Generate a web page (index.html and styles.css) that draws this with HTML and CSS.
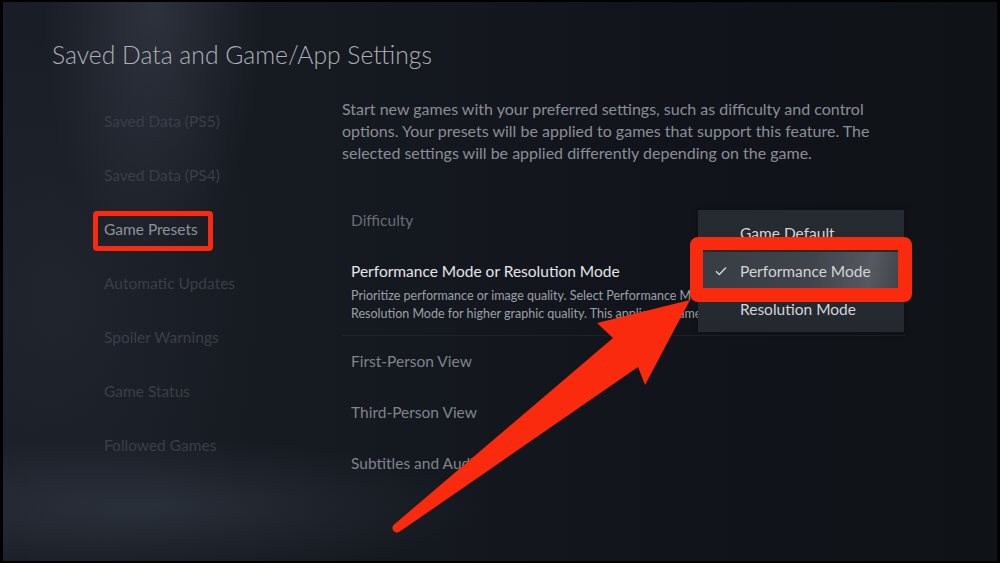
FILE: index.html
```html
<!DOCTYPE html>
<html lang="en">
<head>
<meta charset="utf-8">
<title>Saved Data and Game/App Settings</title>
<link rel="stylesheet" href="styles.css">
</head>
<body>
<div class="frame">
  <h1 class="title">Saved Data and Game/App Settings</h1>
  <div class="layout">
    <nav class="side">
      <div class="side-item">Saved Data (PS5)</div>
      <div class="side-item">Saved Data (PS4)</div>
      <div class="side-item current">Game Presets</div>
      <div class="side-item">Automatic Updates</div>
      <div class="side-item">Spoiler Warnings</div>
      <div class="side-item">Game Status</div>
      <div class="side-item">Followed Games</div>
    </nav>
    <main class="content">
      <p class="intro">Start new games with your preferred settings, such as difficulty and control<br>options. Your presets will be applied to games that support this feature. The<br>selected settings will be applied differently depending on the game.</p>
      <div class="settings">
        <div class="setting dim">Difficulty</div>
        <div class="setting focused">
          <div class="setting-name">Performance Mode or Resolution Mode</div>
          <div class="setting-desc">Prioritize performance or image quality. Select Performance Mode for higher frame rate or<br>Resolution Mode for higher graphic quality. This applies to games that support this setting.</div>
        </div>
        <div class="setting">First-Person View</div>
        <div class="setting">Third-Person View</div>
        <div class="setting">Subtitles and Audio</div>
      </div>
    </main>
  </div>

  <div class="dropdown">
    <div class="option">Game Default</div>
    <div class="option selected">
      <svg class="check" width="12" height="10" viewBox="0 0 12 10"><path d="M1 5.2 L4.3 8.4 L11 1.4" fill="none" stroke="#d6d8db" stroke-width="1.4"/></svg>
      Performance Mode
    </div>
    <div class="option">Resolution Mode</div>
  </div>

  <div class="mark mark-presets"></div>
  <div class="mark mark-perf"></div>

  <svg class="arrow" width="1000" height="563" viewBox="0 0 1000 563">
    <path d="M394.2 524.4 L613 338 L597 323 L690 300 L645 385 L638 367 L399.8 531.6 A4.5 4.5 0 0 1 394.2 524.4 Z" fill="#fa2a0e"/>
  </svg>
</div>
</body>
</html>
```

FILE: styles.css
```css
* { box-sizing: border-box; }

html, body {
  margin: 0;
  padding: 0;
  background: #000;
}

.frame {
  position: relative;
  width: 1000px;
  height: 563px;
  overflow: hidden;
  border-style: solid;
  border-color: #000;
  border-width: 2px 3px 2px 3px;
  font-family: "Lato", "Open Sans", sans-serif;
  background:
    radial-gradient(ellipse 110px 260px at 150px 0px, rgba(95, 104, 120, 0.30), rgba(95, 104, 120, 0) 100%),
    radial-gradient(ellipse 330px 70px at 150px 505px, rgba(85, 95, 110, 0.28), rgba(85, 95, 110, 0) 100%),
    radial-gradient(ellipse 200px 300px at 60px 300px, rgba(60, 68, 82, 0.20), rgba(60, 68, 82, 0) 100%),
    linear-gradient(90deg, #191d25 0%, #151920 35%, #11151b 65%, #0f1318 100%);
}

.title {
  margin: 0;
  padding: 38px 0 0 49px;
  font-size: 24.7px;
  line-height: 30px;
  font-weight: 300;
  color: #adb1b7;
}

.layout {
  display: flex;
  padding-top: 24px;
}

.side {
  width: 339px;
  padding-left: 101px;
  display: flex;
  flex-direction: column;
}

.side-item {
  height: 54px;
  line-height: 54px;
  font-size: 15.5px;
  color: #3a3f48;
  white-space: nowrap;
}

.side-item.current {
  color: #8e9299;
}

.content {
  flex: 1;
  padding-top: 4px;
  padding-right: 92px;
}

.intro {
  margin: 0;
  font-size: 16px;
  line-height: 22px;
  color: #8a8e95;
  white-space: nowrap;
}

.settings {
  margin-top: 31px;
}

.setting {
  padding: 15px 0 16px 9px;
  font-size: 15.5px;
  line-height: 20px;
  color: #80848b;
  white-space: nowrap;
}

.setting.dim {
  color: #686d75;
}

.setting.focused {
  padding-bottom: 12px;
  border-bottom: 1px solid rgba(255, 255, 255, 0.05);
}

.setting-name {
  color: #e4e6e9;
}

.setting-desc {
  width: 347px;
  overflow: hidden;
  margin-top: 6px;
  font-size: 12.5px;
  line-height: 18px;
  color: #9ca0a6;
}

.dropdown {
  position: absolute;
  left: 695px;
  top: 208px;
  width: 206px;
  height: 122px;
  padding: 4px 0;
  background: linear-gradient(180deg, #262a31 0%, #24282f 100%);
  box-shadow: 0 0 6px rgba(0, 0, 0, 0.35);
}

.option {
  position: relative;
  height: 38px;
  line-height: 38px;
  padding-left: 42px;
  font-size: 15.5px;
  color: #d3d5d8;
  white-space: nowrap;
}

.option.selected {
  margin: 0 6px 0 5px;
  padding-left: 37px;
  background: linear-gradient(100deg, #383c43 0%, #3f434a 55%, #565a60 85%, #3f434a 100%);
}

.check {
  position: absolute;
  left: 12px;
  top: 14px;
}

.mark {
  position: absolute;
  border-style: solid;
  border-color: #fa2a0e;
}

.mark-presets {
  left: 90px;
  top: 209px;
  width: 120px;
  height: 40px;
  border-width: 5px;
  border-radius: 4px;
}

.mark-perf {
  left: 687px;
  top: 235px;
  width: 222px;
  height: 65px;
  border-width: 13px 14px 14px 13px;
  border-radius: 8px;
}

.arrow {
  position: absolute;
  left: -3px;
  top: -2px;
}
```
